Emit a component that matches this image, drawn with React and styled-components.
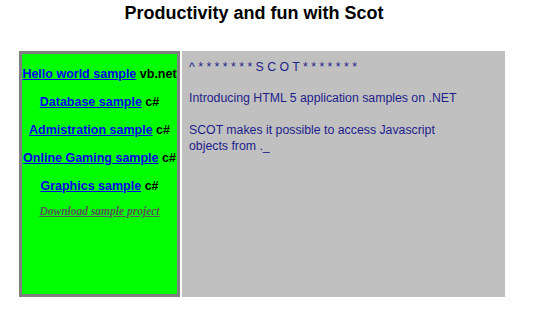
import React from "react";
import styled, { createGlobalStyle } from "styled-components";

const Global = createGlobalStyle`
  html, body { margin: 0; padding: 0; background: #fefefe; }
  body { font-family: "Liberation Sans", Arial, sans-serif; }
`;

const Page = styled.div`
  width: 540px;
  height: 323px;
  padding: 0 0 0 19px;
  box-sizing: border-box;
`;

const Title = styled.h1`
  margin: 0;
  padding: 3px 0 0 0;
  width: 470px;
  text-align: center;
  font-size: 18px;
  font-weight: bold;
  color: #000;
  line-height: 21px;
  height: 51px;
  box-sizing: border-box;
`;

const Table = styled.div`
  display: flex;
  gap: 2px;
  height: 246px;
`;

const LeftCell = styled.div`
  width: 161px;
  box-sizing: border-box;
  border: 3px solid #808080;
  background: #00ff00;
  display: flex;
  flex-direction: column;
  align-items: center;
  padding-top: 13px;
  gap: 13px;
`;

const Item = styled.div`
  font-size: 12.5px;
  font-weight: bold;
  color: #000;
  line-height: 15px;
  white-space: nowrap;
`;

const Link = styled.a`
  color: #0000ee;
  text-decoration: underline;
`;

const Download = styled.a`
  font-family: "Liberation Serif", "Times New Roman", serif;
  font-style: italic;
  font-weight: bold;
  font-size: 11.5px;
  color: #555;
  text-decoration: underline;
  margin-top: -2px;
`;

const RightCell = styled.div`
  width: 323px;
  background: #c0c0c0;
  box-sizing: border-box;
  padding: 8px 7px;
  color: #1e1e8a;
  font-size: 12.3px;
  line-height: 16px;
`;

const Para = styled.p`
  margin: 0 0 ${(p) => (p.$tight ? "15px" : "16px")} 0;
`;

const samples = [
  ["Hello world sample", "vb.net"],
  ["Database sample", "c#"],
  ["Admistration sample", "c#"],
  ["Online Gaming sample", "c#"],
  ["Graphics sample", "c#"],
];

export default function App() {
  return (
    <>
      <Global />
      <Page>
        <Title>Productivity and fun with Scot</Title>
        <Table>
          <LeftCell>
            {samples.map(([name, lang]) => (
              <Item key={name}>
                <Link href="#">{name}</Link> {lang}
              </Item>
            ))}
            <Download href="#">Download sample project</Download>
          </LeftCell>
          <RightCell>
            <Para $tight>^ * * * * * * * S C O T * * * * * * *</Para>
            <Para>Introducing HTML 5 application samples on .NET</Para>
            <Para>
              SCOT makes it possible to access Javascript
              <br />
              objects from ._
            </Para>
          </RightCell>
        </Table>
      </Page>
    </>
  );
}
